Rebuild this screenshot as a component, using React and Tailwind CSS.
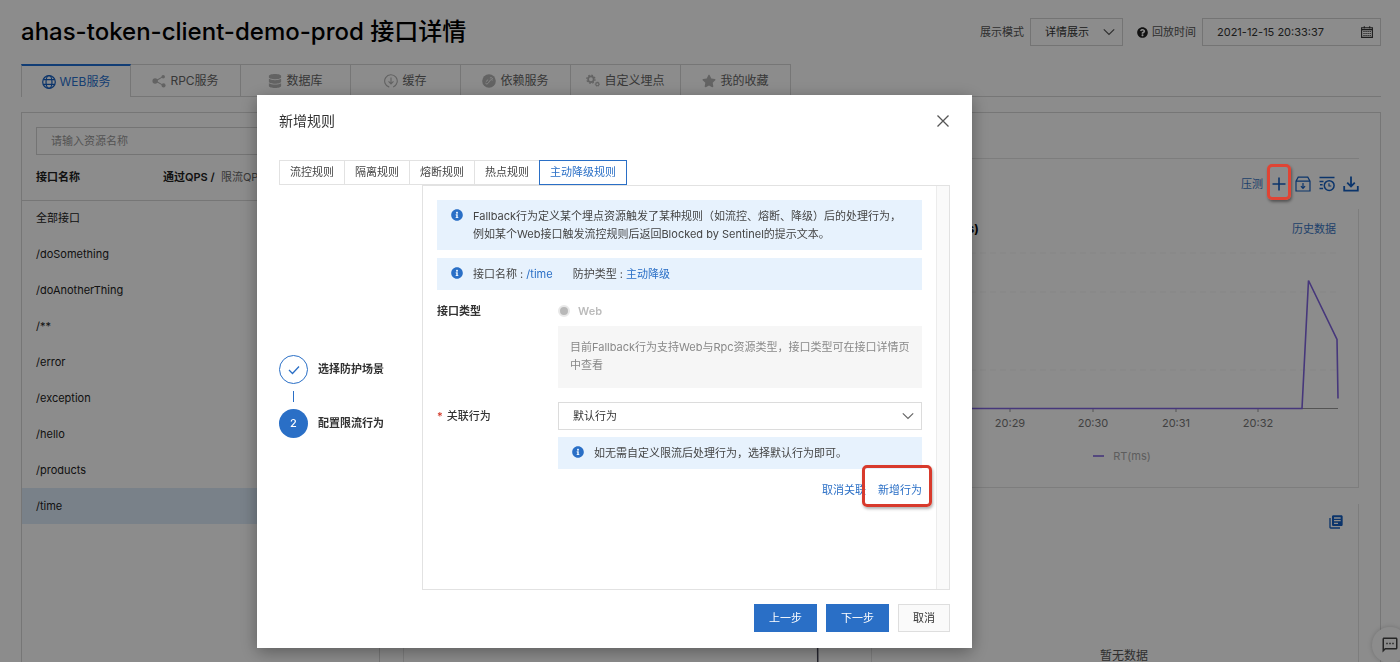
import React, { useState } from "react";
import { FaDatabase, FaStar, FaInfoCircle, FaQuestionCircle } from "react-icons/fa";
import { MdLibraryBooks, MdOutlineSms } from "react-icons/md";

const WebIcon = () => (
  <svg viewBox="0 0 16 16" className="size-3.5" fill="none" stroke="currentColor" strokeWidth="1.4">
    <circle cx="8" cy="8" r="7.2" />
    <ellipse cx="8" cy="8" rx="3.4" ry="7.2" />
    <path d="M1.6 5.4h12.8M1.6 10.6h12.8" />
  </svg>
);

const RpcIcon = () => (
  <svg viewBox="0 0 16 16" className="size-3.5" fill="currentColor">
    <path d="M4 8 12.6 3M4 8l9 5" stroke="currentColor" strokeWidth="1.2" />
    <circle cx="3.6" cy="8" r="3.1" />
    <circle cx="12.8" cy="3" r="2" />
    <circle cx="13.2" cy="13" r="2.3" />
  </svg>
);

const CacheIcon = () => (
  <svg viewBox="0 0 16 16" className="size-3.5" fill="none" stroke="currentColor" strokeWidth="1.3">
    <path d="M6 15a7.2 7.2 0 1 1 4.5-.2M12 13.8a7.2 7.2 0 0 0 2.4-2.4" />
    <path d="M8 4v7.2M5.2 8.4 8 11.3l2.8-2.9" />
  </svg>
);

const DependIcon = () => (
  <svg viewBox="0 0 16 16" className="size-3.5">
    <circle cx="8" cy="8" r="7.8" fill="currentColor" />
    <path
      d="M4 10.6c1.4 1.4 2.6.6 3.4-.6l1.4-2.2c.8-1.2 2-1.8 3.4-.8M9 4.6c1.4-.8 3-.2 3.2 1.2M4.4 8.8 7 6.4"
      fill="none"
      stroke="#fff"
      strokeWidth="1"
    />
  </svg>
);

const BuryIcon = () => (
  <svg viewBox="0 0 16 16" className="size-3.5" fill="none" stroke="currentColor">
    <circle cx="5.6" cy="6" r="3.2" strokeWidth="2" />
    <circle cx="5.6" cy="6" r="4.7" strokeWidth="1.4" strokeDasharray="1.9 1.79" />
    <circle cx="13" cy="11.6" r="1.8" strokeWidth="1.3" />
    <circle cx="13" cy="11.6" r="2.6" strokeWidth="0.7" strokeDasharray="1.1 0.94" />
  </svg>
);

const CalendarIcon = ({ className }) => (
  <svg viewBox="0 0 12 12" className={className} fill="none" stroke="currentColor">
    <path d="M.6 1.8h10.8v9.6H.6zM.6 3.6h10.8M3.3.2v2.4M8.7.2v2.4" strokeWidth="1.1" />
    <path d="M2.4 5.5h7.4M2.4 7.5h7.4M2.4 9.5h7.4" strokeWidth="1.1" strokeDasharray="1.2 .86" />
  </svg>
);

const Chevron = ({ className }) => (
  <svg viewBox="0 0 12 12" className={className} fill="none" stroke="currentColor" strokeWidth="1.2">
    <path d="m.8 3.4 5.2 5 5.2-5" />
  </svg>
);

const tabs = [
  { name: "WEB服务", icon: <WebIcon /> },
  { name: "RPC服务", icon: <RpcIcon /> },
  { name: "数据库", icon: <FaDatabase className="size-3.5" /> },
  { name: "缓存", icon: <CacheIcon /> },
  { name: "依赖服务", icon: <DependIcon /> },
  { name: "自定义埋点", icon: <BuryIcon /> },
  { name: "我的收藏", icon: <FaStar className="size-3.5" /> },
];

const apis = [
  "全部接口",
  "/doSomething",
  "/doAnotherThing",
  "/**",
  "/error",
  "/exception",
  "/hello",
  "/products",
  "/time",
];

const ruleTabs = ["流控规则", "隔离规则", "熔断规则", "热点规则", "主动降级规则"];

const ticks = [
  { x: 38, label: "20:28" },
  { x: 120, label: "20:29" },
  { x: 203, label: "20:30" },
  { x: 286, label: "20:31" },
  { x: 368, label: "20:32" },
];

const Header = () => (
  <header className="flex h-16 shrink-0 items-center justify-between">
    <h1 className="text-2xl font-medium text-black">ahas-token-client-demo-prod 接口详情</h1>
    <div className="flex items-center text-[#555]">
      <label htmlFor="mode" className="mr-1.5">展示模式</label>
      <div className="relative mr-3.5">
        <select
          id="mode"
          className="h-7 w-[93px] appearance-none border border-[#d4d4d4] bg-transparent pl-3.5 text-[#333] outline-none"
        >
          <option>详情展示</option>
        </select>
        <Chevron className="pointer-events-none absolute top-2 right-2 size-3" />
      </div>
      <FaQuestionCircle className="mr-1 size-[11px] text-[#222]" />
      <label htmlFor="replay" className="mr-1.5">回放时间</label>
      <div className="relative text-[#333]">
        <input
          id="replay"
          defaultValue="2021-12-15 20:33:37"
          className="h-7 w-[179px] border border-[#d4d4d4] bg-transparent pl-3.5 outline-none"
        />
        <CalendarIcon className="pointer-events-none absolute top-2 right-2 size-3" />
      </div>
    </div>
  </header>
);

const ServiceTabs = ({ active, onChange }) => (
  <nav className="flex h-[33px] shrink-0 text-[#666]">
    {tabs.map((tab) => (
      <button
        key={tab.name}
        onClick={() => onChange(tab.name)}
        className={
          tab.name === active
            ? "flex w-[110px] items-center justify-center gap-1 border-t-2 border-r border-l border-t-[#1f6fd6] border-r-[#d8d8d8] border-l-[#d8d8d8] text-xs text-[#2a72d0]"
            : "flex w-[110px] items-center justify-center gap-1 border-t border-r border-b border-[#d8d8d8] text-xs"
        }
      >
        <span className={tab.name === active ? "text-[#1560c4]" : "text-[#b4b4b4]"}>{tab.icon}</span>
        {tab.name}
      </button>
    ))}
    <div className="flex-1 border-b border-[#d8d8d8]"></div>
  </nav>
);

const ApiList = () => {
  const [current, setCurrent] = useState("/time");

  return (
    <div className="w-[358px] shrink-0 border-r border-[#d8d8d8] pt-3.5">
      <div className="px-3.5">
        <input
          aria-label="请输入资源名称"
          placeholder="请输入资源名称"
          className="h-7 w-full border border-[#d4d4d4] px-3.5 outline-none placeholder:text-[#999]"
        />
      </div>
      <table className="w-full text-left">
        <thead>
          <tr className="h-[45px] border-b border-[#d8d8d8]">
            <th className="w-[141px] pl-3.5 font-semibold text-[#222]">接口名称</th>
            <th className="font-normal text-[#666]">
              <b className="font-semibold text-[#222]">通过QPS /</b>&nbsp; 限流QPS
            </th>
          </tr>
        </thead>
        <tbody>
          {apis.map((api) => (
            <tr
              key={api}
              onClick={() => setCurrent(api)}
              className={api === current ? "h-9 bg-[#dcebfa]" : "h-9"}
            >
              <td colSpan="2" className="pl-3.5 text-[#222]">{api}</td>
            </tr>
          ))}
        </tbody>
      </table>
    </div>
  );
};

const Toolbar = () => (
  <div className="flex h-[50px] items-center justify-end gap-2 text-[#1560c4]">
    <a href="#test" className="text-[#3a76c4]">压测</a>
    <button aria-label="新增" className="relative">
      <svg viewBox="0 0 16 16" className="size-4" fill="none" stroke="currentColor" strokeWidth="1.6">
        <path d="M8 1.5v13M1.5 8h13" />
      </svg>
      <span className="absolute -inset-x-1 -top-3 -bottom-2 z-60 rounded-[5px] border-[3px] border-[#e04434] shadow-[1px_2px_3px_rgba(0,0,0,0.4)]"></span>
    </button>
    <button aria-label="归档">
      <svg viewBox="0 0 16 16" className="size-4" fill="none" stroke="currentColor" strokeWidth="1.2">
        <path d="M1 15V5.2L3.2 1.2h9.6L15 5.2V15zM1 5.2h14M8 7v5.2M5.9 10.2 8 12.4l2.1-2.2" />
      </svg>
    </button>
    <button aria-label="历史">
      <svg viewBox="0 0 16 16" className="size-4" fill="none" stroke="currentColor" strokeWidth="1.5">
        <path d="M.5 1.5h15M.5 5.4h4M1 8.8h2.6M.5 12.6h3.6" />
        <circle cx="10.2" cy="9.6" r="4.9" />
        <path d="M10 7.2v2.8h2.3" strokeWidth="1.2" />
      </svg>
    </button>
    <button aria-label="下载">
      <svg viewBox="0 0 16 16" className="size-4" fill="none" stroke="currentColor" strokeWidth="1.8">
        <path d="M8 .5v9.6M4.2 6.6 8 10.4l3.8-3.8M1.2 10v4.6h13.6V10" />
      </svg>
    </button>
  </div>
);

const RtCard = () => (
  <section className="border-r border-b border-[#e4e4e4]">
    <div className="flex items-center justify-between pt-3 pr-[22px] pl-[22px]">
      <h2 className="text-xs font-bold text-black">平均RT(ms)</h2>
      <a href="#history" className="text-[#3a76c4]">历史数据</a>
    </div>
    <svg viewBox="0 0 468 249" className="w-full" fontSize="11" textAnchor="middle" fill="#777">
      <path d="M20 15h428M20 54h428M20 132h428" stroke="#f4f4f4" strokeDasharray="6 4" />
      <path d="M20 170.5h428" stroke="#999" />
      {ticks.map((t) => (
        <g key={t.label}>
          <path d={`M${t.x} 170v4`} stroke="#999" />
          <text x={t.x} y="189">{t.label}</text>
        </g>
      ))}
      <path d="M20 170.5h392l6.500-128 28.500 59 1 59" fill="none" stroke="#8064e0" strokeWidth="1.600" />
      <path d="M203 218h11" stroke="#8064e0" strokeWidth="1.600" />
      <text x="242" y="222" fill="#aaa">RT(ms)</text>
    </svg>
  </section>
);

const Info = ({ children }) => (
  <div className="flex gap-2.5 bg-[#e7f2fd] py-[7px] pr-2 pl-3.5 leading-[18px] text-[#444]">
    <FaInfoCircle className="mt-0.5 size-3 shrink-0 text-[#2a6fc6]" />
    <p>{children}</p>
  </div>
);

const Steps = () => (
  <ol className="flex w-[143px] shrink-0 flex-col items-start justify-center pt-[18px] font-semibold text-[#333]">
    <li className="flex items-center gap-2.5">
      <span className="flex size-[29px] items-center justify-center rounded-full border border-[#2a6fc6] text-[#2a6fc6]">
        <svg viewBox="0 0 12 12" className="size-3" fill="none" stroke="currentColor" strokeWidth="1.3">
          <path d="m1 6 3.500 3.500L11 2.500" />
        </svg>
      </span>
      选择防护场景
    </li>
    <li className="my-[7px] ml-3.5 h-[11px] border-l border-[#2a6fc6]"></li>
    <li className="flex items-center gap-2.5">
      <span className="flex size-[29px] items-center justify-center rounded-full bg-[#2a6fc6] font-medium text-white">
        2
      </span>
      配置限流行为
    </li>
  </ol>
);

const RuleDialog = () => {
  const [rule, setRule] = useState("主动降级规则");

  return (
    <div
      role="dialog"
      aria-label="新增规则"
      className="flex w-[715px] flex-col bg-white px-[22px] pb-4 text-[#333] shadow-[0_4px_16px_rgba(0,0,0,0.35)]"
    >
      <div className="flex h-[65px] items-start justify-between pt-4">
        <h2 className="text-sm">新增规则</h2>
        <button aria-label="关闭" className="pt-1 pr-px">
          <svg viewBox="0 0 12 12" className="size-3" stroke="#555" strokeWidth="1.300">
            <path d="m.5.5 11 11M11.500.5l-11 11" />
          </svg>
        </button>
      </div>

      <div className="flex">
        {ruleTabs.map((name) => (
          <button
            key={name}
            onClick={() => setRule(name)}
            className={
              name === rule
                ? "relative -mr-px h-[25px] border border-[#2a6fc6] px-2.5 text-[#2a6fc6]"
                : "-mr-px h-[25px] border border-[#e2e2e2] px-2.5 text-[#444]"
            }
          >
            {name}
          </button>
        ))}
      </div>

      <div className="flex">
        <Steps />
        <div className="flex h-[405px] flex-1 border border-[#e2e2e2]">
          <form className="flex-1 px-3.5 pt-3.5">
            <Info>
              Fallback行为定义某个埋点资源触发了某种规则（如流控、熔断、降级）后的处理行为，
              <br />
              例如某个Web接口触发流控规则后返回Blocked by Sentinel的提示文本。
            </Info>
            <div className="mt-2">
              <Info>
                接口名称 : <span className="mr-5 text-[#2a6fc6]">/time</span>
                防护类型 : <span className="text-[#2a6fc6]">主动降级</span>
              </Info>
            </div>

            <div className="mt-3 flex leading-[18px]">
              <span className="w-[121px] font-semibold">接口类型</span>
              <div className="flex-1">
                <label className="flex items-center gap-2 font-semibold text-[#bbb]">
                  <input
                    type="radio"
                    defaultChecked
                    disabled
                    className="size-3 appearance-none rounded-full border-2 border-[#e8e8e8] bg-[#b8b8b8]"
                  />
                  Web
                </label>
                <p className="mt-1.5 bg-[#f6f6f6] pt-3 pr-2 pb-3.5 pl-3 text-[#888]">
                  目前Fallback行为支持Web与Rpc资源类型，接口类型可在接口详情页中查看
                </p>
              </div>
            </div>

            <div className="mt-3.5 flex leading-[18px]">
              <label htmlFor="action" className="w-[121px] pt-[5px] font-medium">
                <span className="mr-1 text-[#d03020]">*</span>关联行为
              </label>
              <div className="flex-1">
                <div className="relative mb-[7px]">
                  <select
                    id="action"
                    className="h-7 w-full appearance-none border border-[#dcdcdc] bg-white pl-3.5 outline-none"
                  >
                    <option>默认行为</option>
                  </select>
                  <Chevron className="pointer-events-none absolute top-2 right-2 size-3 text-[#666]" />
                </div>
                <Info>如无需自定义限流后处理行为，选择默认行为即可。</Info>
                <div className="mt-3 flex justify-end gap-3 text-[#2a6fc6]">
                  <a href="#cancel">取消关联</a>
                  <a href="#add" className="relative">
                    新增行为
                    <span className="absolute -top-4 -right-2.5 -bottom-2 -left-4 rounded-[5px] border-[3px] border-[#d83a2c] shadow-[1px_2px_3px_rgba(0,0,0,0.3)]"></span>
                  </a>
                </div>
              </div>
            </div>
          </form>
          <div className="w-[13px] border-l border-[#ececec] bg-[#fafafa]"></div>
        </div>
      </div>

      <div className="mt-3.5 flex justify-end gap-[9px]">
        <button className="h-7 w-[63px] bg-[#2a6fc6] text-white">上一步</button>
        <button className="h-7 w-[63px] bg-[#2a6fc6] text-white">下一步</button>
        <button className="h-7 w-[52px] border border-[#dedede] bg-[#fafafa]">取消</button>
      </div>
    </div>
  );
};

const App = () => {
  const [service, setService] = useState("WEB服务");

  return (
    <div className="flex h-screen flex-col overflow-hidden bg-white pr-[19px] pl-[21px] font-[Inter,'Noto_Sans_CJK_SC',sans-serif] text-[11px]">
      <Header />
      <ServiceTabs active={service} onChange={setService} />

      <main className="mt-[15px] flex flex-1 border-x border-t border-[#d8d8d8]">
        <ApiList />
        <div className="flex-1 pr-[21px] pl-[23px]">
          <div className="h-[46px] border-b border-[#e4e4e4]"></div>
          <Toolbar />
          <div className="grid grid-cols-2 gap-x-[18px] gap-y-4">
            <section className="border border-[#e4e4e4]"></section>
            <RtCard />
            <section className="h-[260px] border-x border-[#e4e4e4]">
              <svg viewBox="0 0 468 200" className="w-full" fill="none">
                <path d="M20 80h394l1 120" stroke="#445" strokeWidth="1.500" />
              </svg>
            </section>
            <section className="h-[260px] border-r border-[#e4e4e4] px-3.5 pt-2.5">
              <MdLibraryBooks className="ml-auto size-4 text-[#1560c4]" />
              <p className="mt-[118px] text-center text-xs text-[#555]">暂无数据</p>
            </section>
          </div>
        </div>
      </main>

      <button
        aria-label="反馈"
        className="fixed -right-2 -bottom-px flex size-9 items-center justify-center rounded-full bg-white text-[#444] shadow-[0_0_5px_rgba(0,0,0,0.2)]"
      >
        <MdOutlineSms className="size-[18px]" />
      </button>

      {/* dialog mask */}
      <div className="fixed inset-0 z-40 bg-black/45"></div>
      <div className="fixed inset-0 z-50 flex items-start justify-center pt-[95px] pr-[171px]">
        <RuleDialog />
      </div>
    </div>
  );
};

export default App;
